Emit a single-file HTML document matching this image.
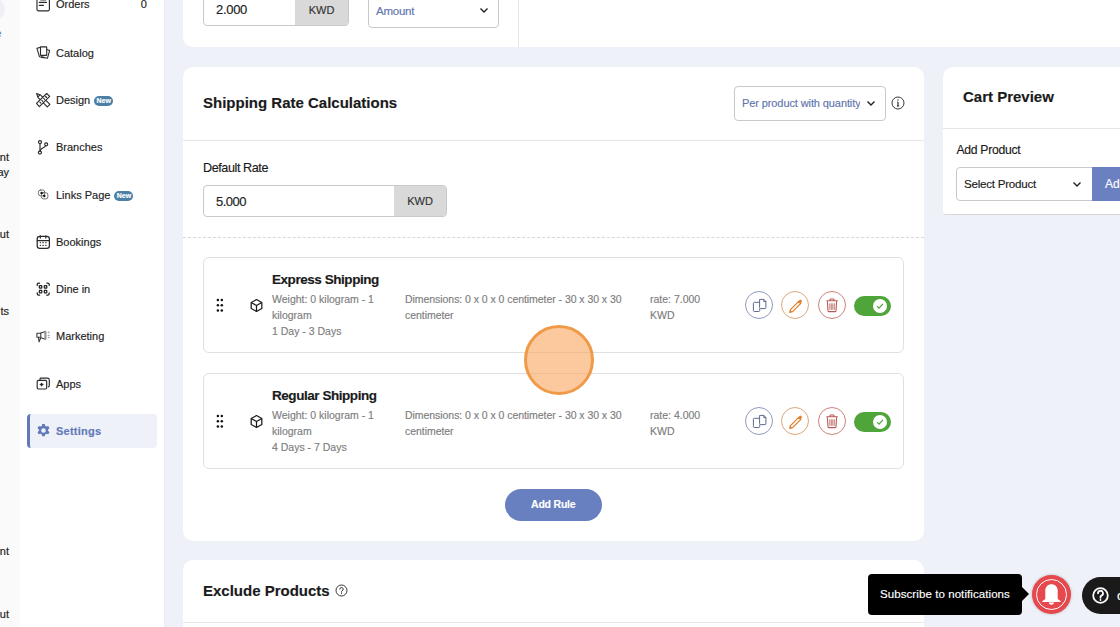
<!DOCTYPE html>
<html><head><meta charset="utf-8">
<style>
*{box-sizing:border-box;margin:0;padding:0}
html,body{width:1120px;height:627px;overflow:hidden;background:#eff1f8;font-family:"Liberation Sans",sans-serif;color:#1c1c1c;position:relative}
div{-webkit-text-stroke:0.15px currentColor}
.abs{position:absolute}
#strip{left:0;top:0;width:20px;height:627px;background:#fafafa}
#side{left:20px;top:0;width:145px;height:627px;background:#fff;border-right:1px solid #ecedf1}
.frag{position:absolute;right:11px;font-size:11px;color:#222;white-space:nowrap;line-height:15px}
.nav{position:absolute;left:36px;width:121px;height:20px;font-size:11px;color:#222}
.nav .ic{position:absolute;left:0;top:3px;width:14px;height:14px}
.nav .tx{position:absolute;left:20px;top:3px;line-height:14px;white-space:nowrap}
.badge{display:inline-block;position:relative;top:-0.5px;margin-left:4px;width:19px;height:10px;border-radius:5px;background:#4b7fa6;color:#fff;font-size:7px;font-weight:bold;line-height:10px;text-align:center;vertical-align:middle}
.card{position:absolute;background:#fff;border-radius:10px}
.title{position:absolute;font-weight:bold;font-size:15px;color:#1a1a1a;white-space:nowrap}
.inp{position:absolute;border:1px solid #c9c9c9;border-radius:4px;background:#fff;overflow:hidden}
.addon{position:absolute;top:0;bottom:0;right:0;background:#d9d9d9;color:#333;font-size:11px;display:flex;align-items:center;justify-content:center}
.rule{position:absolute;left:203px;width:701px;height:96px;border:1px solid #e0e0e0;border-radius:6px;background:#fff}
.gray{color:#7d7d7d;font-size:10.5px;line-height:16px;position:absolute;white-space:nowrap}
.cbtn{position:absolute;width:28px;height:28px;border-radius:50%;border:1px solid}
</style></head><body>
<div id="strip" class="abs">
  <div class="abs" style="left:-17px;top:-2px;width:21.5px;height:21.5px;border-radius:50%;background:#eff0f6"></div>
  <div class="abs" style="left:-4.8px;top:26.5px;font-size:11px;color:#5a72b5">e</div>
  <div class="frag" style="top:149.5px">nt</div>
  <div class="frag" style="top:164.5px">ay</div>
  <div class="frag" style="top:226.5px">ut</div>
  <div class="frag" style="top:303.5px">ts</div>
  <div class="frag" style="top:544px">nt</div>
  <div class="frag" style="top:606.5px">ut</div>
</div>
<div id="side" class="abs"></div>

<!-- nav -->
<div class="nav" style="top:-6px"><div class="tx">Orders</div><div class="abs" style="left:104.8px;top:3px;line-height:14px">0</div></div>
<div class="nav" style="top:43px"><div class="tx">Catalog</div></div>
<div class="nav" style="top:90px"><div class="tx">Design<span class="badge">New</span></div></div>
<div class="nav" style="top:137px"><div class="tx">Branches</div></div>
<div class="nav" style="top:185px"><div class="tx">Links Page<span class="badge">New</span></div></div>
<div class="nav" style="top:232px"><div class="tx">Bookings</div></div>
<div class="nav" style="top:279px"><div class="tx">Dine in</div></div>
<div class="nav" style="top:326px"><div class="tx">Marketing</div></div>
<div class="nav" style="top:374px"><div class="tx">Apps</div></div>
<div class="abs" style="left:27px;top:414px;width:130px;height:34px;background:#eef1f8;border-radius:4px;border-left:3px solid #6179b8"></div>
<div class="nav" style="top:421px;color:#6179b8;font-weight:bold"><div class="tx" style="letter-spacing:0.25px">Settings</div></div>

<svg class="abs" style="left:33px;top:-5px" width="20" height="20" viewBox="0 0 20 20" fill="none" stroke="#2a2a2a" stroke-width="1.15" stroke-linecap="round" stroke-linejoin="round"><rect x="4" y="1" width="12.4" height="14.8" rx="1.2"/><path d="M6.3 7.4h7.2M6.3 10.3h4.2"/><path d="M8.2 4.6h4" stroke-width="2"/></svg>
<svg class="abs" style="left:33px;top:42px" width="20" height="20" viewBox="0 0 20 20" fill="none" stroke="#2a2a2a" stroke-width="1.1" stroke-linecap="round" stroke-linejoin="round"><path d="M7.5 5.4 3.9 6.2l2.5 8.5 8 1.6 2.2-7.7-2.8-1.1"/><rect x="7.5" y="4.9" width="6.2" height="8.5" rx="0.4" fill="#fff"/><path d="M8.8 15.1l2 .4" stroke-width="1.6"/></svg>
<svg class="abs" style="left:33px;top:90px" width="20" height="20" viewBox="0 0 20 20" fill="none" stroke="#2a2a2a" stroke-width="1.1" stroke-linecap="round" stroke-linejoin="round"><path d="M3.6 3.6 7.7 5.1 16.9 14.3 14.3 16.9 5.1 7.7z" fill="#fff"/><path d="M5.2 6.6 6.6 5.2"/><path d="M13.7 3.5 16.7 6.4 6.4 16.6 3.5 13.4z" fill="#fff"/><path d="M12.6 6.5l1 1M10.7 8.4l1 1M8.8 10.3l1 1M6.9 12.2l1 1"/></svg>
<svg class="abs" style="left:33px;top:137px" width="20" height="20" viewBox="0 0 20 20" fill="none" stroke="#2a2a2a" stroke-width="1.15" stroke-linecap="round" stroke-linejoin="round"><circle cx="7" cy="5.1" r="1.55"/><circle cx="6.9" cy="15.6" r="1.55"/><circle cx="13.2" cy="7.3" r="1.5"/><path d="M7 6.7v7.3"/><path d="M12.5 8.9c-.8 2.2-4.6 1.8-5.4 4.9"/></svg>
<svg class="abs" style="left:33px;top:184px" width="20" height="20" viewBox="0 0 20 20" fill="none" stroke="#6e6e6e" stroke-width="1.0" stroke-linecap="round" stroke-linejoin="round"><rect x="5.4" y="6" width="6.3" height="5.8" rx="2.2"/><rect x="8.4" y="8.7" width="6.5" height="6.2" rx="2.2"/><circle cx="8.6" cy="8.9" r="1.2" fill="#111" stroke="none"/><circle cx="11.3" cy="12" r="1.2" fill="#111" stroke="none"/></svg>
<svg class="abs" style="left:33px;top:232px" width="20" height="20" viewBox="0 0 20 20" fill="none" stroke="#2a2a2a" stroke-width="1.25" stroke-linecap="round" stroke-linejoin="round"><rect x="4.2" y="4.3" width="12.2" height="12" rx="2.6"/><path d="M4.3 8.5h12M7.3 3.8v2.2M12.8 3.8v2.2"/><path d="M7.3 10.7h.1M9.9 10.7h.3M12.8 10.7h.2M7.3 13.4h.1M9.9 13.4h.3M12.8 13.4h.2" stroke-width="1.2"/></svg>
<svg class="abs" style="left:33px;top:279px" width="20" height="20" viewBox="0 0 20 20" fill="none" stroke="#1f1f1f" stroke-width="1.25" stroke-linecap="round" stroke-linejoin="round"><path d="M4.2 6.4V5.6c0-.9.7-1.6 1.6-1.6h.8M13.8 4h.8c.9 0 1.6.7 1.6 1.6v.8M16.2 13.8v.8c0 .9-.7 1.6-1.6 1.6h-.8M6.6 16.2h-.8c-.9 0-1.6-.7-1.6-1.6v-.8"/><rect x="6.3" y="6.5" width="2.5" height="2.5" rx="0.6"/><rect x="11.3" y="6.5" width="2.5" height="2.5" rx="0.6"/><rect x="6.3" y="11.3" width="2.5" height="2.5" rx="0.6"/><rect x="11.3" y="11.3" width="2.5" height="2.5" rx="0.6"/></svg>
<svg class="abs" style="left:33px;top:326px" width="20" height="20" viewBox="0 0 20 20" fill="none" stroke="#3a3a3a" stroke-width="1.1" stroke-linecap="round" stroke-linejoin="round"><path d="M3.9 7.2h3.9v4.1H3.9z"/><path d="M7.8 7.1l4.9-1.7v7.9l-4.9-1.5"/><path d="M12.1 5.6v7.6" stroke="#999" stroke-width="1.6"/><path d="M5.4 11.4l.7 4.5 1.5-3.9"/><path d="M15.2 6.6l1.1-.6M15.2 9.3h1.2M15.2 11.3l1.1.5" stroke="#999"/></svg>
<svg class="abs" style="left:33px;top:374px" width="20" height="20" viewBox="0 0 20 20" fill="none" stroke="#2a2a2a" stroke-width="1.15" stroke-linecap="round" stroke-linejoin="round"><path d="M7 6.2V4.9c0-.4.4-.8.8-.8h6.6c1.1 0 1.9.9 1.9 1.9v5.8c0 .6-.4 1-.9 1.1"/><rect x="4.2" y="6.3" width="9.5" height="8.7" rx="1.2" fill="#fff"/><path d="M8.6 9.3v2.5M7.3 10.5h2.6" stroke-width="1.3"/></svg>
<svg class="abs" style="left:35.6px;top:422.8px" width="15" height="15" viewBox="0 0 24 24"><path fill="#6179b8" fill-rule="evenodd" d="M10 1.5h4l.7 3.1 1.9 1.1 3-1 2 3.5-2.3 2.1v2.2l2.3 2.1-2 3.5-3-1-1.9 1.1-.7 3.1h-4l-.7-3.1-1.9-1.1-3 1-2-3.5 2.3-2.1v-2.2L2.4 8.2l2-3.5 3 1 1.9-1.1zM12 8.3a3.7 3.7 0 1 0 0 7.4 3.7 3.7 0 0 0 0-7.4z"/></svg>
<!-- top card -->
<div class="card" style="left:183px;top:-20px;width:960px;height:67px"></div>
<div class="abs" style="left:518px;top:0;width:1px;height:47px;background:#e6e6e6"></div>
<div class="inp" style="left:203px;top:-8px;width:146px;height:34px"><div class="abs" style="left:12px;top:8.5px;font-size:13px;color:#222;letter-spacing:-0.3px">2.000</div><div class="addon" style="width:53px;padding-top:2px">KWD</div></div>
<div class="inp" style="left:368px;top:-8px;width:131px;height:36px"><div class="abs" style="left:7px;top:11.5px;font-size:11.5px;letter-spacing:-0.25px;color:#6075ad">Amount</div><svg class="abs" style="left:110px;top:14px" width="10" height="7" viewBox="0 0 10 7" fill="none" stroke="#222" stroke-width="1.4"><path d="M1.5 1.5 5 5l3.5-3.5"/></svg></div>

<!-- shipping card -->
<div class="card" style="left:183px;top:67px;width:741px;height:474px"></div>
<div class="title" style="left:203px;top:94px">Shipping Rate Calculations</div>
<div class="inp" style="left:734px;top:86px;width:152px;height:35px"><div class="abs" style="left:7px;top:10px;font-size:11px;color:#6075ad;white-space:nowrap;width:118px;overflow:hidden;letter-spacing:-0.1px">Per product with quantity</div><svg class="abs" style="left:131px;top:13px" width="10" height="7" viewBox="0 0 10 7" fill="none" stroke="#222" stroke-width="1.4"><path d="M1.5 1.5 5 5l3.5-3.5"/></svg></div>
<svg class="abs" style="left:891px;top:96px" width="14" height="14" viewBox="0 0 14 14" fill="none" stroke="#222" stroke-width="0.9"><circle cx="7" cy="7" r="6"/><path d="M7 6v4M6 10h2.2M6.2 6H7" stroke-width="1.1"/><circle cx="7" cy="4" r="0.7" fill="#222" stroke="none"/></svg>
<div class="abs" style="left:183px;top:140px;width:741px;height:1px;background:#e6e6e6"></div>
<div class="abs" style="left:203px;top:161.2px;font-size:12.6px;letter-spacing:-0.42px;color:#1a1a1a">Default Rate</div>
<div class="inp" style="left:203px;top:185px;width:244px;height:32px"><div class="abs" style="left:12px;top:7.5px;font-size:13px;color:#222;letter-spacing:-0.5px">5.000</div><div class="addon" style="width:52px;padding-bottom:1px">KWD</div></div>
<div class="abs" style="left:183px;top:237px;width:741px;height:0;border-top:1px dashed #d8d8d8"></div>


<div class="rule" style="top:257px"></div>
<div class="abs" style="left:216px;top:298px;width:8px;height:15px">
  <svg width="8" height="15" viewBox="0 0 8 15"><g fill="#111"><circle cx="1.9" cy="2" r="1.25"/><circle cx="5.8" cy="2" r="1.25"/><circle cx="1.9" cy="7.3" r="1.25"/><circle cx="5.8" cy="7.3" r="1.25"/><circle cx="1.9" cy="12.4" r="1.25"/><circle cx="5.8" cy="12.4" r="1.25"/></g></svg>
</div>
<div class="abs" style="left:249px;top:298px">
  <svg width="15" height="15" viewBox="0 0 24 24" fill="none" stroke="#1a1a1a" stroke-width="2" stroke-linejoin="round"><path d="M12 2.5 20.5 7.3v9.4L12 21.5 3.5 16.7V7.3z"/><path d="M3.5 7.3 12 12l8.5-4.7M12 12v9.5"/></svg>
</div>
<div class="abs" style="left:272px;top:272px;font-size:13.5px;font-weight:bold;letter-spacing:-0.45px;color:#1a1a1a;white-space:nowrap">Express Shipping</div>
<div class="gray" style="left:272px;top:291px">Weight: 0 kilogram - 1<br>kilogram<br>1 Day - 3 Days</div>
<div class="gray" style="left:405px;top:291px;letter-spacing:-0.05px">Dimensions: 0 x 0 x 0 centimeter - 30 x 30 x 30<br>centimeter</div>
<div class="gray" style="left:650px;top:291px">rate: 7.000<br>KWD</div>
<svg class="abs" style="left:745px;top:291px" width="28" height="28" viewBox="0 0 28 28" fill="none"><circle cx="14" cy="14" r="13.5" stroke="#8f99bf"/><g stroke="#5d6890" stroke-width="1" stroke-linejoin="round"><path d="M14.6 8.4h4.3l2 2v6.3c0 .5-.4.9-.9.9h-4.5c-.5 0-.9-.4-.9-.9z"/><path d="M18.8 8.4v2.2h2.1"/><path d="M14.4 11.3h-5.1c-.5 0-.9.4-.9.9v7.4c0 .5.4.9.9.9h4.5c.5 0 .9-.4.9-.9v-2"/></g></svg>
<svg class="abs" style="left:781px;top:291px" width="28" height="28" viewBox="0 0 28 28" fill="none"><circle cx="14" cy="14" r="13.5" stroke="#dba77c"/><g transform="translate(14.4 14.9) scale(0.86) translate(-14.4 -14.9)"><path d="M18.3 9.6l2.4 2.4-9.6 9.6-3.3.9.9-3.3z" stroke="#e07f2a" stroke-width="1.5" stroke-linejoin="round" fill="#fff"/><path d="M18 9.3l1.3-1.3a1.2 1.2 0 0 1 1.7 0l.7.7a1.2 1.2 0 0 1 0 1.7L20.4 11.7z" fill="#e07f2a"/><path d="M8.6 19.8l-.8 2.7 2.7-.8z" fill="#e07f2a"/></g></svg>
<svg class="abs" style="left:818px;top:291px" width="28" height="28" viewBox="0 0 28 28" fill="none"><circle cx="14" cy="14" r="13.5" stroke="#cc827b"/><g stroke="#b65a54" stroke-width="1.1" stroke-linejoin="round"><path d="M8.4 9.7h11.4M12 9.4V8.6c0-.4.3-.6.6-.6h2.8c.4 0 .6.3.6.6v.8"/><path d="M9.4 10.2l.6 9.6c0 .5.4.8.8.8h6.4c.5 0 .8-.4.8-.8l.6-9.6"/><path d="M11.8 12.3v6.5M13.3 12.3v6.5M14.8 12.3v6.5M16.3 12.3v6.5" stroke-width="0.8"/></g></svg>
<div class="abs" style="left:854px;top:296px;width:37px;height:20px;border-radius:10px;background:#4fa43a">
  <div class="abs" style="left:19px;top:3px;width:14px;height:14px;border-radius:50%;background:#fff">
    <svg class="abs" style="left:3px;top:3px" width="8" height="8" viewBox="0 0 8 8" fill="none" stroke="#4fa43a" stroke-width="1.2"><path d="M1 4.2l2 2 4-4.4"/></svg>
  </div>
</div>

<div class="rule" style="top:373px"></div>
<div class="abs" style="left:216px;top:414px;width:8px;height:15px">
  <svg width="8" height="15" viewBox="0 0 8 15"><g fill="#111"><circle cx="1.9" cy="2" r="1.25"/><circle cx="5.8" cy="2" r="1.25"/><circle cx="1.9" cy="7.3" r="1.25"/><circle cx="5.8" cy="7.3" r="1.25"/><circle cx="1.9" cy="12.4" r="1.25"/><circle cx="5.8" cy="12.4" r="1.25"/></g></svg>
</div>
<div class="abs" style="left:249px;top:414px">
  <svg width="15" height="15" viewBox="0 0 24 24" fill="none" stroke="#1a1a1a" stroke-width="2" stroke-linejoin="round"><path d="M12 2.5 20.5 7.3v9.4L12 21.5 3.5 16.7V7.3z"/><path d="M3.5 7.3 12 12l8.5-4.7M12 12v9.5"/></svg>
</div>
<div class="abs" style="left:272px;top:388px;font-size:13.5px;font-weight:bold;letter-spacing:-0.45px;color:#1a1a1a;white-space:nowrap">Regular Shipping</div>
<div class="gray" style="left:272px;top:407px">Weight: 0 kilogram - 1<br>kilogram<br>4 Days - 7 Days</div>
<div class="gray" style="left:405px;top:407px;letter-spacing:-0.05px">Dimensions: 0 x 0 x 0 centimeter - 30 x 30 x 30<br>centimeter</div>
<div class="gray" style="left:650px;top:407px">rate: 4.000<br>KWD</div>
<svg class="abs" style="left:745px;top:407px" width="28" height="28" viewBox="0 0 28 28" fill="none"><circle cx="14" cy="14" r="13.5" stroke="#8f99bf"/><g stroke="#5d6890" stroke-width="1" stroke-linejoin="round"><path d="M14.6 8.4h4.3l2 2v6.3c0 .5-.4.9-.9.9h-4.5c-.5 0-.9-.4-.9-.9z"/><path d="M18.8 8.4v2.2h2.1"/><path d="M14.4 11.3h-5.1c-.5 0-.9.4-.9.9v7.4c0 .5.4.9.9.9h4.5c.5 0 .9-.4.9-.9v-2"/></g></svg>
<svg class="abs" style="left:781px;top:407px" width="28" height="28" viewBox="0 0 28 28" fill="none"><circle cx="14" cy="14" r="13.5" stroke="#dba77c"/><g transform="translate(14.4 14.9) scale(0.86) translate(-14.4 -14.9)"><path d="M18.3 9.6l2.4 2.4-9.6 9.6-3.3.9.9-3.3z" stroke="#e07f2a" stroke-width="1.5" stroke-linejoin="round" fill="#fff"/><path d="M18 9.3l1.3-1.3a1.2 1.2 0 0 1 1.7 0l.7.7a1.2 1.2 0 0 1 0 1.7L20.4 11.7z" fill="#e07f2a"/><path d="M8.6 19.8l-.8 2.7 2.7-.8z" fill="#e07f2a"/></g></svg>
<svg class="abs" style="left:818px;top:407px" width="28" height="28" viewBox="0 0 28 28" fill="none"><circle cx="14" cy="14" r="13.5" stroke="#cc827b"/><g stroke="#b65a54" stroke-width="1.1" stroke-linejoin="round"><path d="M8.4 9.7h11.4M12 9.4V8.6c0-.4.3-.6.6-.6h2.8c.4 0 .6.3.6.6v.8"/><path d="M9.4 10.2l.6 9.6c0 .5.4.8.8.8h6.4c.5 0 .8-.4.8-.8l.6-9.6"/><path d="M11.8 12.3v6.5M13.3 12.3v6.5M14.8 12.3v6.5M16.3 12.3v6.5" stroke-width="0.8"/></g></svg>
<div class="abs" style="left:854px;top:412px;width:37px;height:20px;border-radius:10px;background:#4fa43a">
  <div class="abs" style="left:19px;top:3px;width:14px;height:14px;border-radius:50%;background:#fff">
    <svg class="abs" style="left:3px;top:3px" width="8" height="8" viewBox="0 0 8 8" fill="none" stroke="#4fa43a" stroke-width="1.2"><path d="M1 4.2l2 2 4-4.4"/></svg>
  </div>
</div>


<div class="abs" style="left:505px;top:489px;width:97px;height:32px;border-radius:16px;background:#6880c0;color:#fff;font-size:10.5px;font-weight:bold;letter-spacing:-0.2px;line-height:12px;padding:9px 0 0 26px;white-space:nowrap">Add Rule</div>

<!-- cart preview -->
<div class="card" style="left:943px;top:67px;width:200px;height:148px;border-radius:10px 10px 3px 3px;border-bottom:1px solid #d8d8d8"></div>
<div class="title" style="left:963px;top:88px">Cart Preview</div>
<div class="abs" style="left:943px;top:128px;width:177px;height:1px;background:#e6e6e6"></div>
<div class="abs" style="left:956.5px;top:143.1px;font-size:12.2px;letter-spacing:-0.3px;color:#1a1a1a">Add Product</div>
<div class="inp" style="left:956px;top:167px;width:141px;height:34px"><div class="abs" style="left:7px;top:8.6px;font-size:11.6px;color:#1a1a1a;letter-spacing:-0.25px">Select Product</div><svg class="abs" style="left:115px;top:13px" width="10" height="7" viewBox="0 0 10 7" fill="none" stroke="#222" stroke-width="1.4"><path d="M1.5 1.5 5 5l3.5-3.5"/></svg></div>
<div class="abs" style="left:1092px;top:167px;width:40px;height:34px;background:#6a80c1;color:#fff;font-size:12px;padding:10px 0 0 13px">Add</div>

<!-- exclude -->
<div class="card" style="left:183px;top:560px;width:741px;height:100px"></div>
<div class="title" style="left:203px;top:582px">Exclude Products</div>
<svg class="abs" style="left:335px;top:584px" width="13" height="13" viewBox="0 0 13 13" fill="none" stroke="#333" stroke-width="1"><circle cx="6.5" cy="6.5" r="5.5"/><path d="M4.8 5.2a1.7 1.7 0 1 1 2.3 1.6c-.4.2-.6.5-.6.9v.5" stroke-linecap="round"/><circle cx="6.5" cy="9.6" r="0.6" fill="#333" stroke="none"/></svg>
<div class="abs" style="left:183px;top:622px;width:741px;height:1px;background:#e6e6e6"></div>

<!-- cursor -->
<div class="abs" style="left:524px;top:325px;width:70px;height:70px;border-radius:50%;background:rgba(250,165,95,0.6);border:3px solid #f09a48"></div>

<!-- tooltip -->
<div class="abs" style="left:868px;top:574px;width:154px;height:41px;background:#000;border-radius:4px;color:#fff;font-size:11.5px;padding:13.8px 0 0 12px;white-space:nowrap;letter-spacing:0.08px">Subscribe to notifications</div>
<svg class="abs" style="left:1021px;top:586px" width="8" height="16" viewBox="0 0 8 16"><path d="M0 0 8 8 0 16z" fill="#000"/></svg>
<div class="abs" style="left:1032px;top:575px;width:39px;height:39px;border-radius:50%;background:#e5484d;box-shadow:0 0 3px rgba(0,0,0,0.25)">
  <div class="abs" style="left:4px;top:4px;width:31px;height:31px;border-radius:50%;border:1.4px solid #fff"></div>
  <svg class="abs" style="left:10px;top:9px" width="19" height="21" viewBox="0 0 19 21"><path d="M9.5 0.3c-3.6 0-6.2 2.6-6.2 6.2v8.5L0.2 17.3v0.7h18.6v-0.7l-3.1-2.3V6.5c0-3.6-2.6-6.2-6.2-6.2z" fill="#fff"/><path d="M6.8 18.6a2.7 2.1 0 0 0 5.4 0z" fill="#fff"/></svg>
</div>
<div class="abs" style="left:1082px;top:577px;width:60px;height:37px;border-radius:19px;background:#1a1a1a">
  <svg class="abs" style="left:8.5px;top:9px" width="19" height="19" viewBox="0 0 19 19" fill="none" stroke="#fff" stroke-width="1.8"><circle cx="9.5" cy="9.5" r="7.3"/><path d="M7 7.3a2.5 2.5 0 1 1 3.4 2.3c-.6.3-.9.8-.9 1.4v.8" stroke-linecap="round"/><circle cx="9.5" cy="14" r="0.9" fill="#fff" stroke="none"/></svg>
  <div class="abs" style="left:35px;top:11px;font-size:13px;color:#fff">c</div>
</div>
</body></html>
